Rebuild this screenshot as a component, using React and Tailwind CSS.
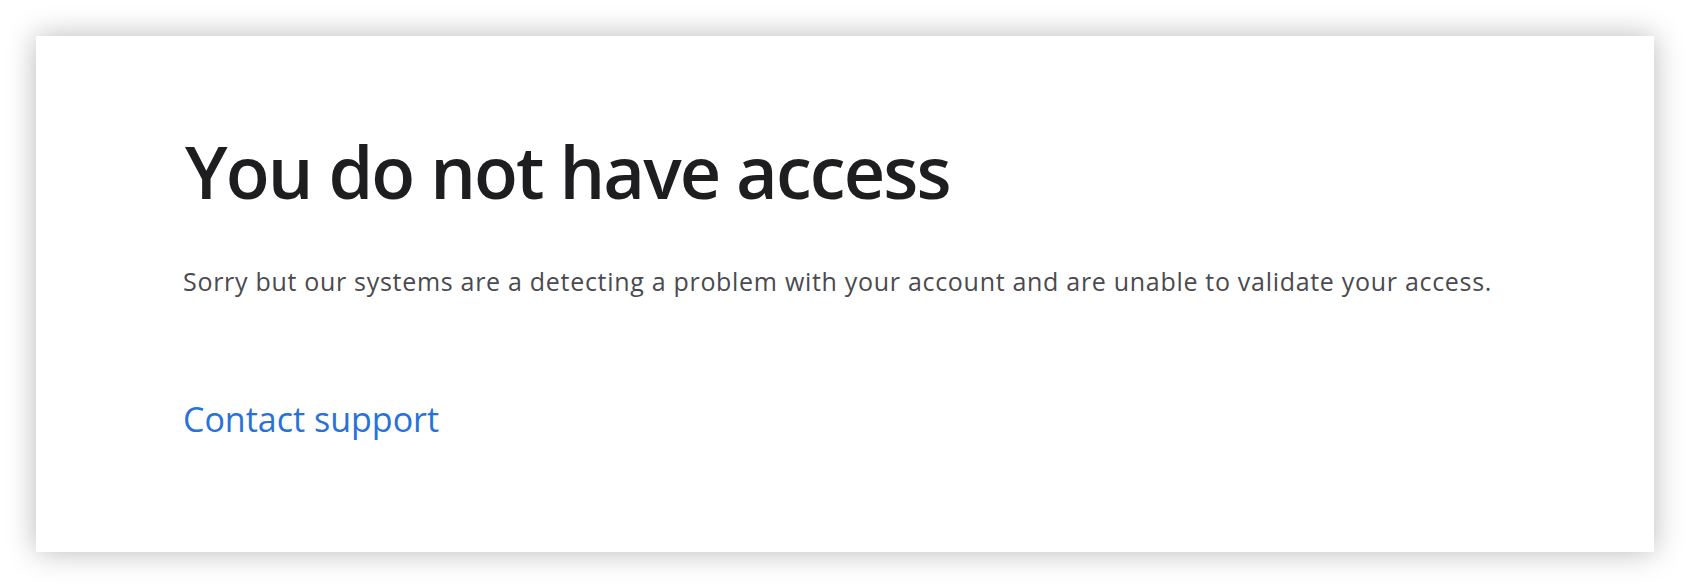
import React from 'react';

const App = () => {
  return (
    <div className="min-h-screen bg-white p-[36px]" style={{ fontFamily: '"Open Sans", "Noto Sans", sans-serif' }}>
      <div className="h-[516px] bg-white shadow-[0_0_28px_rgba(0,0,0,0.28)] pl-[147px] pt-[99px]">
        <h1 className="ml-[2px] text-[72px] leading-[72px] font-semibold tracking-[-1.9px] text-[#1e1e21]">
          You do not have access
        </h1>
        <p className="mt-[58px] text-[25px] leading-[32px] tracking-[0.7px] text-[#4a4a4f]">
          Sorry but our systems are a detecting a problem with your account and are unable to validate your access.
        </p>
        <a href="#" className="mt-[102px] block w-fit text-[34px] leading-[40px] text-[#2772d9]">
          Contact support
        </a>
      </div>
    </div>
  );
};

export default App;
